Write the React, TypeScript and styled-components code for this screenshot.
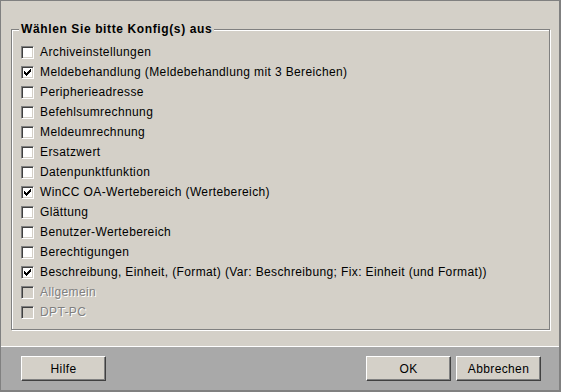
import React from 'react'
import styled, { createGlobalStyle } from 'styled-components'

//Global
const GlobalStyle = createGlobalStyle`
body {
  margin: 0;
  font-family: "Liberation Sans", Arial, sans-serif;
  font-size: 12px;
  color: #000;
}
`

//Components
const Window = styled.div`
display: flex;
flex-direction: column;
box-sizing: border-box;
width: 561px;
height: 392px;
background-color: #d4d0c8;
border-top: 1px solid #808080;
border-left: 1px solid #808080;
border-right: 2px solid #808080;
border-bottom: 2px solid #808080;
`
const Main = styled.div`
display: flex;
flex-direction: column;
height: 345px;
box-sizing: border-box;
padding: 28px 9px 16px 10px;
`
const GroupBox = styled.div`
position: relative;
flex: 1;
display: flex;
flex-direction: column;
padding: 12px 0 0 9px;
border: 1px solid #808080;
box-shadow: inset 1px 1px 0 #fff, 1px 1px 0 #fff;
`
const Legend = styled.span`
position: absolute;
top: -8px;
left: 7px;
padding: 0 2px;
line-height: 14px;
font-weight: bold;
letter-spacing: 0.62px;
background-color: #d4d0c8;
`
const Row = styled.div`
display: flex;
align-items: flex-start;
height: 20px;
`
const Box = styled.span<{ $disabled?: boolean }>`
position: relative;
box-sizing: border-box;
flex: none;
width: 13px;
height: 13px;
margin-top: 4px;
border: 1px solid;
border-color: #808080 #fff #fff #808080;
box-shadow: inset 1px 1px 0 #404040, inset -1px -1px 0 #d4d0c8;
background-color: ${p => (p.$disabled ? '#d4d0c8' : '#fff')};

svg {
  position: absolute;
  top: -1px;
  left: -1px;
}
`
const Label = styled.span<{ $disabled?: boolean }>`
margin-left: 6px;
line-height: 20px;
letter-spacing: 0.38px;
white-space: nowrap;
color: ${p => (p.$disabled ? '#808080' : '#000')};
text-shadow: ${p => (p.$disabled ? '1px 1px 0 #fff' : 'none')};
`
const Footer = styled.div`
display: flex;
align-items: flex-start;
height: 44px;
box-sizing: border-box;
padding: 9px 18px 0 20px;
border-top: 1px solid #fff;
background-color: #a9a9a9;
`
const Spacer = styled.div`
flex: 1;
`
const Button = styled.button<{ $gap?: number }>`
box-sizing: border-box;
width: 85px;
height: 25px;
margin-left: ${p => p.$gap ?? 0}px;
padding: 0;
font-family: "Liberation Sans", Arial, sans-serif;
font-size: 12px;
letter-spacing: 0.38px;
color: #000;
background-color: #d4d0c8;
border: 1px solid;
border-color: #fff #404040 #404040 #fff;
box-shadow: inset -1px -1px 0 #808080;
`

function CheckMark() {
  return (
    <svg width="13" height="13" viewBox="0 0 13 13" shapeRendering="crispEdges">
      <path
        d="M3 5h1v3h-1z M4 6h1v3h-1z M5 7h1v3h-1z M6 6h1v3h-1z M7 5h1v3h-1z M8 4h1v3h-1z M9 3h1v3h-1z"
        fill="#000"
      />
    </svg>
  )
}

const items: { label: string; checked?: boolean; disabled?: boolean }[] = [
  { label: 'Archiveinstellungen' },
  { label: 'Meldebehandlung (Meldebehandlung mit 3 Bereichen)', checked: true },
  { label: 'Peripherieadresse' },
  { label: 'Befehlsumrechnung' },
  { label: 'Meldeumrechnung' },
  { label: 'Ersatzwert' },
  { label: 'Datenpunktfunktion' },
  { label: 'WinCC OA-Wertebereich (Wertebereich)', checked: true },
  { label: 'Glättung' },
  { label: 'Benutzer-Wertebereich' },
  { label: 'Berechtigungen' },
  {
    label: 'Beschreibung, Einheit, (Format) (Var: Beschreibung; Fix: Einheit (und Format))',
    checked: true,
  },
  { label: 'Allgemein', disabled: true },
  { label: 'DPT-PC', disabled: true },
]

export default function App() {
  return (
    <>
      <GlobalStyle />
      <Window>
        <Main>
          <GroupBox>
            <Legend>Wählen Sie bitte Konfig(s) aus</Legend>
            {items.map(item => (
              <Row key={item.label}>
                <Box $disabled={item.disabled}>{item.checked && <CheckMark />}</Box>
                <Label $disabled={item.disabled}>{item.label}</Label>
              </Row>
            ))}
          </GroupBox>
        </Main>
        <Footer>
          <Button>Hilfe</Button>
          <Spacer />
          <Button>OK</Button>
          <Button $gap={5}>Abbrechen</Button>
        </Footer>
      </Window>
    </>
  )
}
